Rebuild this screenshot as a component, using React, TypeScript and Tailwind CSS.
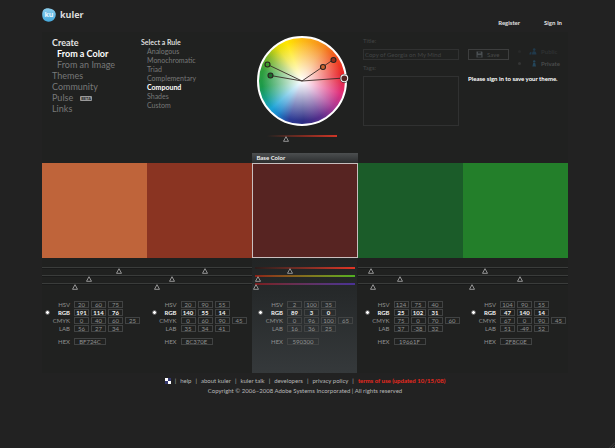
/**
 * Kuler - create a theme from a color
 */

import React from "react";

type Swatch = {
  hex: string;
  fill: string;
  hsv: number[];
  rgb: number[];
  cmyk: number[];
  lab: number[];
};

const swatches: Swatch[] = [
  { hex: "BF724C", fill: "#bf643a", hsv: [20, 60, 75], rgb: [191, 114, 76], cmyk: [0, 40, 60, 25], lab: [56, 27, 34] },
  { hex: "8C370E", fill: "#8a3422", hsv: [20, 90, 55], rgb: [140, 55, 14], cmyk: [0, 60, 90, 45], lab: [35, 34, 41] },
  { hex: "590300", fill: "#572422", hsv: [2, 100, 35], rgb: [89, 3, 0], cmyk: [0, 96, 100, 65], lab: [16, 36, 25] },
  { hex: "19661F", fill: "#1b5c29", hsv: [124, 75, 40], rgb: [25, 102, 31], cmyk: [75, 0, 70, 60], lab: [37, -38, 32] },
  { hex: "2F8C0E", fill: "#237f2a", hsv: [104, 90, 55], rgb: [47, 140, 14], cmyk: [67, 0, 90, 45], lab: [51, -49, 52] },
];

const BASE = 2;

const navItems = ["Themes", "Community", "Pulse", "Links"];

const rules = [
  "Analogous",
  "Monochromatic",
  "Triad",
  "Complementary",
  "Compound",
  "Shades",
  "Custom",
];

const footerLinks = ["help", "about kuler", "kuler talk", "developers", "privacy policy"];

const channels = [
  { name: "Red", track: "bg-linear-to-r from-[#2a1c1b] to-[#e03424]" },
  { name: "Green", track: "bg-linear-to-r from-[#8a2018] to-[#4fb021]" },
  { name: "Blue", track: "bg-linear-to-r from-[#7a1c1c] to-[#4a3196]" },
];

function Thumb({ percent }: { percent: number }) {
  return (
    <svg
      viewBox="0 0 7 6"
      className="absolute top-0 h-[6px] w-[7px] -translate-x-1/2"
      style={{ left: `${percent}%` }}
    >
      <path d="M3.5 0.7 L6 5.3 H1 Z" fill="#1b1c1c" stroke="#b4b4b4" strokeWidth="0.8" />
    </svg>
  );
}

function Slider({
  label,
  value,
  max,
  track,
}: {
  label: string;
  value: number;
  max: number;
  track: string;
}) {
  return (
    <div className="relative h-2">
      <div className={`h-[2px] ${track}`} />
      <div className="relative mx-1 -mt-px h-[6px]">
        <Thumb percent={(value / max) * 100} />
      </div>
      <input
        type="range"
        aria-label={label}
        min={0}
        max={max}
        defaultValue={value}
        className="absolute inset-0 w-full opacity-0"
      />
    </div>
  );
}

function Logo() {
  return (
    <div className="flex items-center gap-1">
      <svg viewBox="0 0 14 14" className="h-[14px] w-[14px]">
        <defs>
          <linearGradient id="blob" x1="0" y1="0" x2="0" y2="1">
            <stop offset="0" stopColor="#8ccdec" />
            <stop offset="1" stopColor="#45a9dc" />
          </linearGradient>
        </defs>
        <path
          d="M1.2 2.2 C2.6 0.4 5 0.2 7.4 0.4 C10.6 0.6 13.2 2.2 13.7 5.4 C14.1 8.6 12.6 11.6 9.8 13 C7 14.2 3.6 13.9 1.6 11.6 C-0.2 9.2 -0.2 4.4 1.2 2.2 Z"
          fill="url(#blob)"
        />
        <text
          x="7"
          y="9.4"
          textAnchor="middle"
          fontSize="7"
          fontWeight="700"
          fill="#e8f6fd"
          fontFamily="Open Sans, sans-serif"
        >
          ku
        </text>
      </svg>
      <span className="font-['Open_Sans',sans-serif] text-[9px] font-bold text-[#dcdcdc]">kuler</span>
    </div>
  );
}

function ColorWheel() {
  return (
    <div className="relative h-[90px] w-[90px]">
      <div className="h-full w-full rounded-full border-2 border-white bg-[radial-gradient(circle,#fff_0%,rgba(255,255,255,0.75)_18%,rgba(255,255,255,0)_66%),conic-gradient(#fdbb14_0deg,#f58a1f_32deg,#ef4123_62deg,#e8252a_80deg,#e0307c_108deg,#a83a94_130deg,#5b2f8c_152deg,#2b2c83_178deg,#2c3c96_198deg,#1c86cc_216deg,#1ba3d6_228deg,#17a08a_244deg,#1b9a4a_262deg,#2f9e3c_285deg,#86b82a_306deg,#e6dc0c_324deg,#ffe600_338deg,#fdbb14_360deg)]" />
      <svg viewBox="0 0 90 90" className="absolute inset-0 h-full w-full overflow-visible">
        <g stroke="#3a2b26" strokeWidth="0.9" fill="none">
          <path d="M45 45 L10.5 28.5" />
          <path d="M45 45 L13.5 39.5" />
          <path d="M45 45 L76.5 23.5" />
          <path d="M45 45 L87 42" />
        </g>
        <g stroke="#2a2320" strokeWidth="1.1">
          <circle cx="10.5" cy="28.5" r="2.5" fill="#3f9a2c" />
          <circle cx="13.5" cy="39.5" r="2.5" fill="#1b6a2c" />
          <circle cx="66" cy="31" r="2.5" fill="#c8642f" />
          <circle cx="76.5" cy="24" r="2.5" fill="#96301d" />
        </g>
        <circle cx="87.3" cy="42.3" r="4.4" fill="#1a1a1a" />
        <circle cx="87.3" cy="42.3" r="3.4" fill="#572422" stroke="#f2f2f2" strokeWidth="1.1" />
      </svg>
    </div>
  );
}

function SaveForm() {
  return (
    <form className="flex min-w-0 gap-[9px] pt-1 pl-3 text-[6px] text-[#434545]">
      <div className="w-24">
        <label htmlFor="title" className="block leading-[9px]">
          Title:
        </label>
        <input
          id="title"
          defaultValue="Copy of Georgia on My Mind"
          className="mt-1 block h-[11px] w-full border border-[#303131] bg-transparent px-px"
        />
        <label htmlFor="tags" className="mt-[3px] block leading-[9px]">
          Tags:
        </label>
        <textarea
          id="tags"
          className="mt-1 block h-[50px] w-full resize-none border border-[#303131] bg-transparent"
        />
      </div>
      <div className="min-w-0 flex-1 pt-[10px]">
        <div className="flex items-start justify-between pr-2">
          <button
            type="button"
            className="mt-[3px] flex h-[11px] w-[41px] items-center gap-1 border border-[#3d3e3e] pl-[7px] text-[#4a4b4b]"
          >
            <svg viewBox="0 0 7 7" className="h-[7px] w-[7px]">
              <path d="M0.5 0.5 H6 L6.5 1 V6.5 H0.5 Z" fill="#4b5053" />
              <path d="M2 0.5 H4.8 V2.6 H2 Z M1.6 4 H5.4 V6.5 H1.6 Z" fill="#26292a" />
            </svg>
            Save
          </button>
          <fieldset className="flex flex-col gap-[2px] font-bold">
            <label className="flex h-[10px] items-center gap-1 text-[#2f3233]">
              <input
                type="radio"
                name="visibility"
                className="h-[3px] w-[3px] appearance-none rounded-full bg-[#282929]"
              />
              <svg viewBox="0 0 8 7" className="ml-1 h-[7px] w-2" fill="#20394a">
                <circle cx="5.2" cy="1.6" r="1.3" />
                <path d="M3 6.5 C3 3.6 4 3.2 5.2 3.2 C6.6 3.2 7.4 3.8 7.4 6.5 Z" />
                <path d="M0.4 6.5 C0.4 4.6 1.2 4 2.4 4 V6.5 Z" />
              </svg>
              Public
            </label>
            <label className="flex h-[10px] items-center gap-1 text-[#4a4c4c]">
              <input
                type="radio"
                name="visibility"
                defaultChecked
                className="h-[3px] w-[3px] appearance-none rounded-full bg-[#343535]"
              />
              <svg viewBox="0 0 8 7" className="ml-1 h-[7px] w-2" fill="#24465a">
                <circle cx="5.2" cy="1.4" r="1.2" />
                <path d="M3.4 6.6 L4.2 3 H6.2 L7 6.6 Z" />
              </svg>
              Private
            </label>
          </fieldset>
        </div>
        <p className="mt-[6px] leading-[10px] font-bold whitespace-nowrap text-white">
          Please sign in to save your theme.
        </p>
      </div>
    </form>
  );
}

function ValueRow({
  label,
  column,
  values,
  active = false,
}: {
  label: string;
  column: number;
  values: (number | string)[];
  active?: boolean;
}) {
  const wide = label === "HEX";
  return (
    <div
      className={`flex h-[7px] items-center text-[6px] leading-[5px] ${
        active ? "font-bold text-[#f0f0f0]" : "text-[#909191]"
      } ${wide ? "mt-[5px]" : ""}`}
    >
      <span className="flex w-[5px] shrink-0">
        {active && (
          <input
            type="radio"
            name={`model-${column}`}
            aria-label={`Edit color ${column + 1} as RGB`}
            defaultChecked
            className="h-[5px] w-[5px] appearance-none rounded-full border border-[#555] bg-white"
          />
        )}
      </span>
      <span className="w-5 shrink-0 text-right">{label}</span>
      <div className="ml-1 flex gap-[2px]">
        {values.map((v, i) => (
          <input
            key={i}
            aria-label={`Color ${column + 1} ${label} ${i + 1}`}
            defaultValue={v}
            className={`block h-[7px] border border-[#414343] bg-transparent text-center ${
              wide ? "w-8" : "w-[15px]"
            }`}
          />
        ))}
      </div>
    </div>
  );
}

export default function App() {
  return (
    <div className="relative min-h-screen bg-[#222222] pt-2 pr-[47px] pb-6 pl-[42px] font-['Lato',sans-serif] text-[#777878]">
      <header className="flex h-6 items-start justify-between">
        <Logo />
        <div className="flex gap-6 pt-[10px] pr-[6px] text-[6px] leading-[10px] font-bold text-[#e0e0e0]">
          <a href="#register">Register</a>
          <a href="#signin">Sign In</a>
        </div>
      </header>

      <main className="bg-[#202120]">
        <section className="grid grid-cols-[99fr_111fr_99fr_217fr] pb-[10px]">
          <nav className="flex flex-col items-start pt-[5px] pl-[10px] text-[9px] leading-[11px] whitespace-nowrap">
            <a href="#create" className="font-bold text-[#e4e4e4]">
              Create
            </a>
            <a href="#color" className="pl-[5px] font-bold text-white">
              From a Color
            </a>
            <a href="#image" className="pl-[5px]">
              From an Image
            </a>
            {navItems.map((item) => (
              <a key={item} href={`#${item.toLowerCase()}`} className="flex items-center gap-[7px]">
                {item}
                {item === "Pulse" && (
                  <span className="mt-[2px] h-[5px] rounded-[1px] bg-[#9a9a9a] px-[1px] text-[4px] leading-[5px] font-bold text-[#222]">
                    BETA
                  </span>
                )}
              </a>
            ))}
          </nav>

          <div className="pt-[6px] text-[7px] leading-[9px] whitespace-nowrap">
            <h2 className="font-bold text-[#dedede]">Select a Rule</h2>
            <ul className="pl-[6px]">
              {rules.map((rule) => (
                <li key={rule}>
                  <button
                    type="button"
                    className={`block ${rule === "Compound" ? "font-bold text-white" : ""}`}
                  >
                    {rule}
                  </button>
                </li>
              ))}
            </ul>
          </div>

          <div className="flex flex-col items-center pt-1">
            <ColorWheel />
            <div className="mt-[9px] w-[70px]">
              <Slider
                label="Brightness"
                value={25}
                max={100}
                track="bg-linear-to-r from-[#202120] via-[#7a2a20] to-[#cf3526]"
              />
            </div>
          </div>

          <SaveForm />
        </section>

        <section>
          <div className="grid grid-cols-5">
            <div className="col-start-3 bg-linear-to-b from-[#4c4f50] to-[#2c2e2f] pl-1 text-[6px] leading-[10px] font-bold text-[#f0f0f0]">
              Base Color
            </div>
          </div>
          <div className="grid grid-cols-5">
            {swatches.map((s, i) => (
              <div
                key={s.hex}
                className={`h-[95px] ${i === BASE ? "border border-[#c9bfbf]" : ""}`}
                style={{ backgroundColor: s.fill }}
              />
            ))}
          </div>
        </section>

        {/* sliders and readouts share the highlight behind the base color */}
        <section className="bg-[linear-gradient(#222424,#26292a_30%,#35393b)] bg-[length:20%_100%] bg-center bg-no-repeat pt-[9px] pb-7">
          <div className="grid grid-cols-5">
            {swatches.map((s, i) => (
              <div key={s.hex}>
                {channels.map((channel, c) => (
                  <Slider
                    key={channel.name}
                    label={`Color ${i + 1} ${channel.name}`}
                    value={s.rgb[c]}
                    max={255}
                    track={
                      i === BASE
                        ? `mx-[3px] ${channel.track}`
                        : "border-t border-[#3a3c3b] bg-[#191a1a]"
                    }
                  />
                ))}
              </div>
            ))}
          </div>
          <div className="mt-[10px] flex justify-between pr-[2px] pl-[3px]">
            {swatches.map((s, i) => (
              <div key={s.hex} className="flex w-[95px] flex-col gap-px">
                <ValueRow label="HSV" column={i} values={s.hsv} />
                <ValueRow label="RGB" column={i} values={s.rgb} active />
                <ValueRow label="CMYK" column={i} values={s.cmyk} />
                <ValueRow label="LAB" column={i} values={s.lab} />
                <ValueRow label="HEX" column={i} values={[s.hex]} />
              </div>
            ))}
          </div>
        </section>
      </main>

      <footer className="mt-[3px] text-center text-[6px] leading-[10px] text-[#b8b8b8]">
        <div className="flex items-center justify-center gap-1">
          <svg viewBox="0 0 6 6" className="h-[6px] w-[6px]">
            <rect width="6" height="6" fill="#34386e" />
            <rect width="3" height="3" fill="#fff" />
            <rect x="3" y="3" width="3" height="3" fill="#fff" />
          </svg>
          {footerLinks.map((link) => (
            <React.Fragment key={link}>
              <span>|</span>
              <a href={`#${link.replace(" ", "-")}`}>{link}</a>
            </React.Fragment>
          ))}
          <span>|</span>
          <a href="#terms" className="font-bold text-[#e8291f]">
            terms of use (updated 10/15/08)
          </a>
        </div>
        <p>Copyright © 2006–2008 Adobe Systems Incorporated | All rights reserved</p>
      </footer>

      <svg viewBox="0 0 6 6" className="absolute right-0 bottom-0 h-[6px] w-[6px]" stroke="#4a4a4a" strokeWidth="0.7">
        <path d="M0.5 6 L6 0.5 M3 6 L6 3" />
      </svg>
    </div>
  );
}
